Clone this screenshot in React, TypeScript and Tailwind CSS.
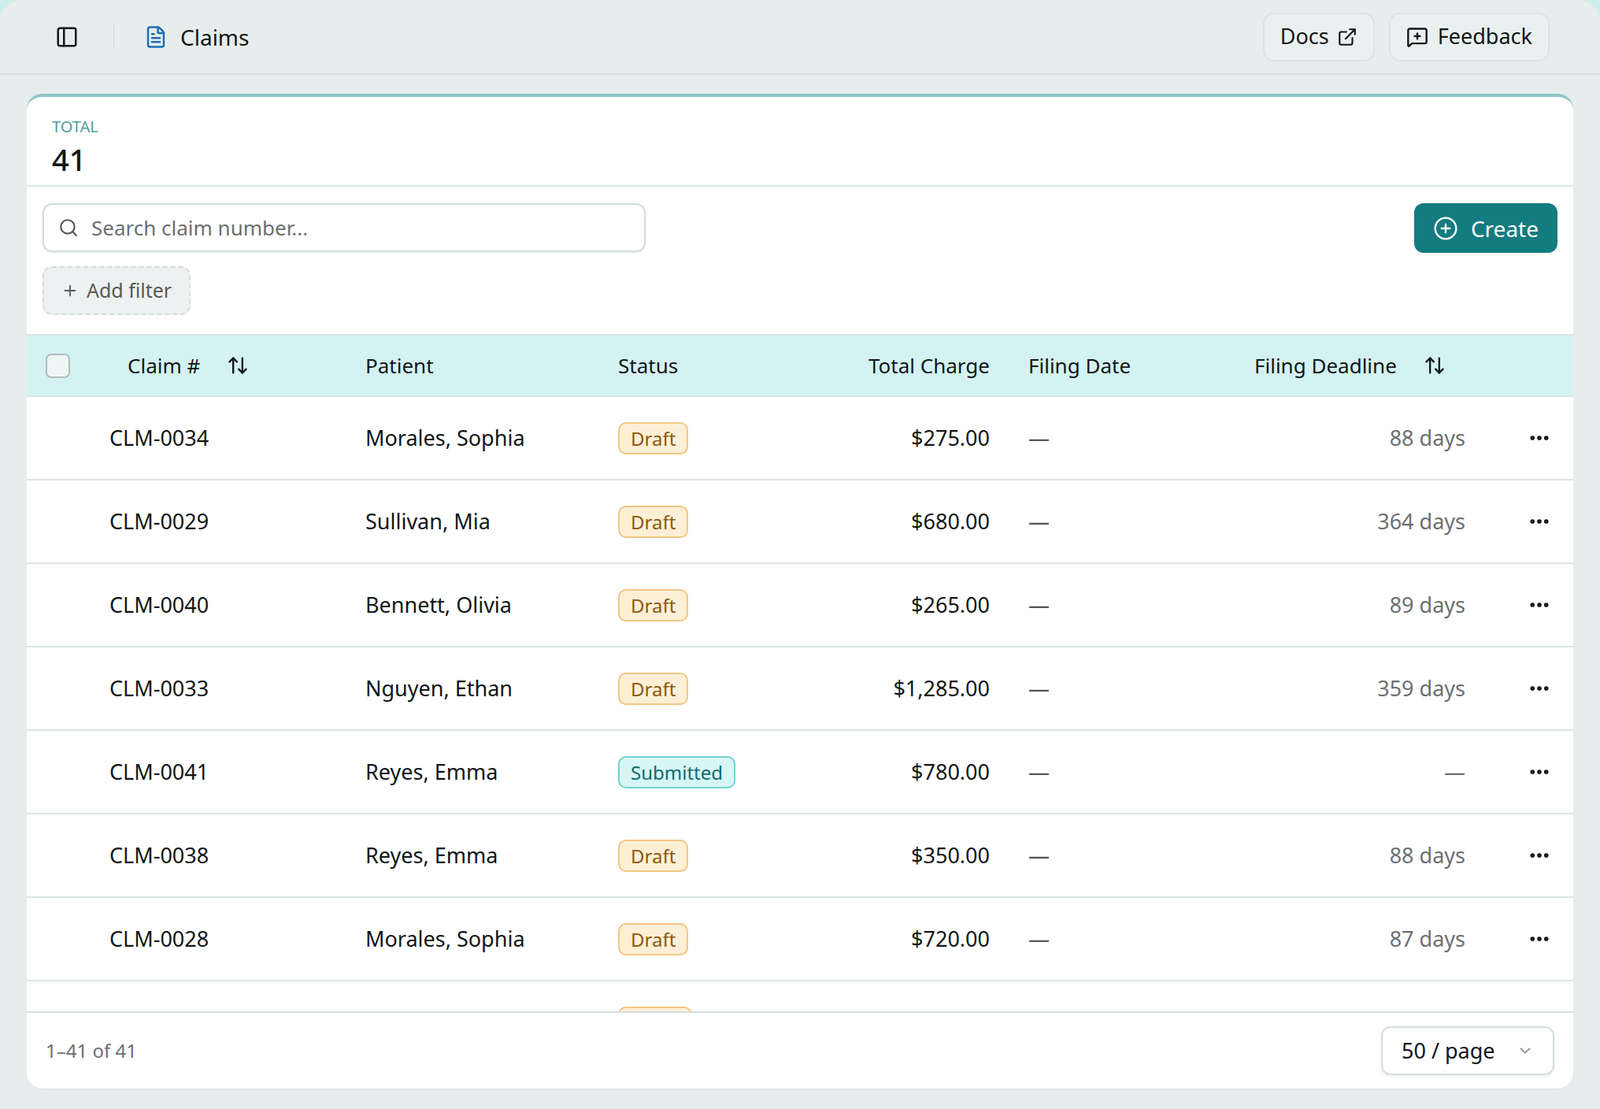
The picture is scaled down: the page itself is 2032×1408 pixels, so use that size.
import { PanelLeft, FileText, ExternalLink, MessageSquarePlus, Search, Plus, CirclePlus, ArrowUpDown, MoreHorizontal, ChevronDown } from "lucide-react";

const rows = [
  { id: "CLM-0034", patient: "Morales, Sophia", status: "Draft", charge: "$275.00", deadline: "88 days" },
  { id: "CLM-0029", patient: "Sullivan, Mia", status: "Draft", charge: "$680.00", deadline: "364 days" },
  { id: "CLM-0040", patient: "Bennett, Olivia", status: "Draft", charge: "$265.00", deadline: "89 days" },
  { id: "CLM-0033", patient: "Nguyen, Ethan", status: "Draft", charge: "$1,285.00", deadline: "359 days" },
  { id: "CLM-0041", patient: "Reyes, Emma", status: "Submitted", charge: "$780.00", deadline: "—" },
  { id: "CLM-0038", patient: "Reyes, Emma", status: "Draft", charge: "$350.00", deadline: "88 days" },
  { id: "CLM-0028", patient: "Morales, Sophia", status: "Draft", charge: "$720.00", deadline: "87 days" },
];

function Badge({ status }: { status: string }) {
  return status === "Draft" ? (
    <span className="rounded-[10px] border-2 border-[#f2c783] bg-[#fdefd6] px-[14px] py-[2px] text-[24px] text-[#8a5a10]">Draft</span>
  ) : (
    <span className="rounded-[10px] border-2 border-[#74d0d0] bg-[#d8f6f6] px-[14px] py-[2px] text-[24px] text-[#0e6b6f]">{status}</span>
  );
}

export default function App() {
  return (
    <div className="h-[1408px] w-[2032px] overflow-hidden bg-[#cfeeee] font-['Inter',sans-serif] text-[#111616]">
      <div className="flex h-full flex-col rounded-tl-[28px] rounded-tr-[28px] bg-[#e7eded]">
        <header className="flex h-[95px] shrink-0 items-center border-b-2 border-[#d8e0e0] pl-[70px] pr-[64px]">
          <PanelLeft className="h-[30px] w-[30px]" strokeWidth={2} />
          <div className="ml-[44px] mr-[38px] h-[32px] w-px bg-[#d3dada]" />
          <FileText className="h-[30px] w-[30px] text-[#1b6fb5]" strokeWidth={2} />
          <span className="ml-[16px] text-[28px]">Claims</span>
          <div className="ml-auto flex gap-[18px]">
            <button className="flex h-[62px] items-center gap-[10px] rounded-[14px] border-2 border-[#dde3e3] bg-[#eaf0f0] px-[20px] text-[27px]">
              Docs <ExternalLink className="h-[26px] w-[26px]" strokeWidth={2} />
            </button>
            <button className="flex h-[62px] items-center gap-[12px] rounded-[14px] border-2 border-[#dde3e3] bg-[#eaf0f0] px-[20px] text-[27px]">
              <MessageSquarePlus className="h-[28px] w-[28px]" strokeWidth={2} /> Feedback
            </button>
          </div>
        </header>

        <div className="flex min-h-0 flex-1 px-[34px] pb-[26px] pt-[24px]">
          <div className="flex min-h-0 flex-1 flex-col overflow-hidden rounded-[20px] border-t-[4px] border-[#8fc4c4] bg-white shadow-[0_1px_2px_rgba(0,0,0,0.06)]">
            <div className="h-[114px] shrink-0 border-b-2 border-[#dde5e5] px-[32px] pt-[28px]">
              <div className="text-[20px] leading-none text-[#4f9c9c]">TOTAL</div>
              <div className="mt-[12px] text-[38px] font-medium leading-none">41</div>
            </div>

            <div className="flex shrink-0 items-start justify-between px-[20px] pt-[21px]">
              <div>
                <div className="flex h-[62px] w-[766px] items-center gap-[16px] rounded-[12px] border-2 border-[#d3dcdc] px-[18px] shadow-[0_2px_3px_rgba(0,0,0,0.06)]">
                  <Search className="h-[26px] w-[26px] text-[#555]" strokeWidth={2} />
                  <span className="text-[26px] text-[#6b7070]">Search claim number...</span>
                </div>
                <button className="mt-[18px] flex h-[62px] items-center gap-[10px] rounded-[12px] border-2 border-dashed border-[#d6dcdc] bg-[#eef1f1] px-[22px] text-[25px] text-[#555b5b]">
                  <Plus className="h-[22px] w-[22px]" strokeWidth={2} /> Add filter
                </button>
              </div>
              <button className="flex h-[63px] items-center gap-[16px] rounded-[12px] bg-[#137c80] px-[24px] text-[28px] text-white">
                <CirclePlus className="h-[32px] w-[32px]" strokeWidth={1.75} /> Create
              </button>
            </div>

            <div className="mt-[24px] flex h-[80px] shrink-0 items-center border-y-2 border-[#d6e4e4] bg-[#d4f2f2] text-[26px]">
              <div className="w-[128px] pl-[24px]">
                <div className="h-[31px] w-[31px] rounded-[7px] border-2 border-[#aebcbc] bg-[#eef6f6]" />
              </div>
              <div className="flex w-[302px] items-center gap-[34px]">Claim # <ArrowUpDown className="h-[28px] w-[28px]" strokeWidth={2} /></div>
              <div className="w-[321px]">Patient</div>
              <div className="flex w-[472px] justify-between"><span>Status</span><span>Total Charge</span></div>
              <div className="w-[49px]" />
              <div className="w-[287px]">Filing Date</div>
              <div className="flex items-center gap-[34px]">Filing Deadline <ArrowUpDown className="h-[28px] w-[28px]" strokeWidth={2} /></div>
            </div>

            <div className="min-h-0 flex-1 overflow-hidden">
              {rows.map((r) => (
                <div key={r.id} className="flex h-[106px] shrink-0 items-center border-b-2 border-[#dde4e4] text-[27px]">
                  <div className="w-[105px] shrink-0" />
                  <div className="w-[325px] shrink-0">{r.id}</div>
                  <div className="w-[321px] shrink-0">{r.patient}</div>
                  <div className="w-[200px] shrink-0"><Badge status={r.status} /></div>
                  <div className="w-[272px] shrink-0 text-right">{r.charge}</div>
                  <div className="w-[49px] shrink-0" />
                  <div className="w-[260px] shrink-0 text-[#555]">—</div>
                  <div className="w-[295px] shrink-0 text-right text-[#6b7070]">{r.deadline}</div>
                  <div className="flex flex-1 justify-center pl-[50px]"><MoreHorizontal className="h-[30px] w-[30px]" strokeWidth={2.5} /></div>
                </div>
              ))}
              <div className="flex h-[106px] items-center">
                <div className="ml-[751px] h-[42px] w-[94px] rounded-[10px] border-2 border-[#f2c783] bg-[#fdefd6]" />
              </div>
            </div>

            <div className="flex h-[98px] shrink-0 items-center justify-between border-t-2 border-[#d6dede] pl-[24px] pr-[24px]">
              <span className="text-[24px] text-[#6b7070]">1–41 of 41</span>
              <div className="flex h-[62px] w-[220px] items-center justify-between rounded-[12px] border-2 border-[#d6dede] px-[24px] text-[27px] shadow-[0_2px_3px_rgba(0,0,0,0.06)]">
                50 / page <ChevronDown className="h-[22px] w-[22px] text-[#999]" strokeWidth={2} />
              </div>
            </div>
          </div>
        </div>
      </div>
    </div>
  );
}
